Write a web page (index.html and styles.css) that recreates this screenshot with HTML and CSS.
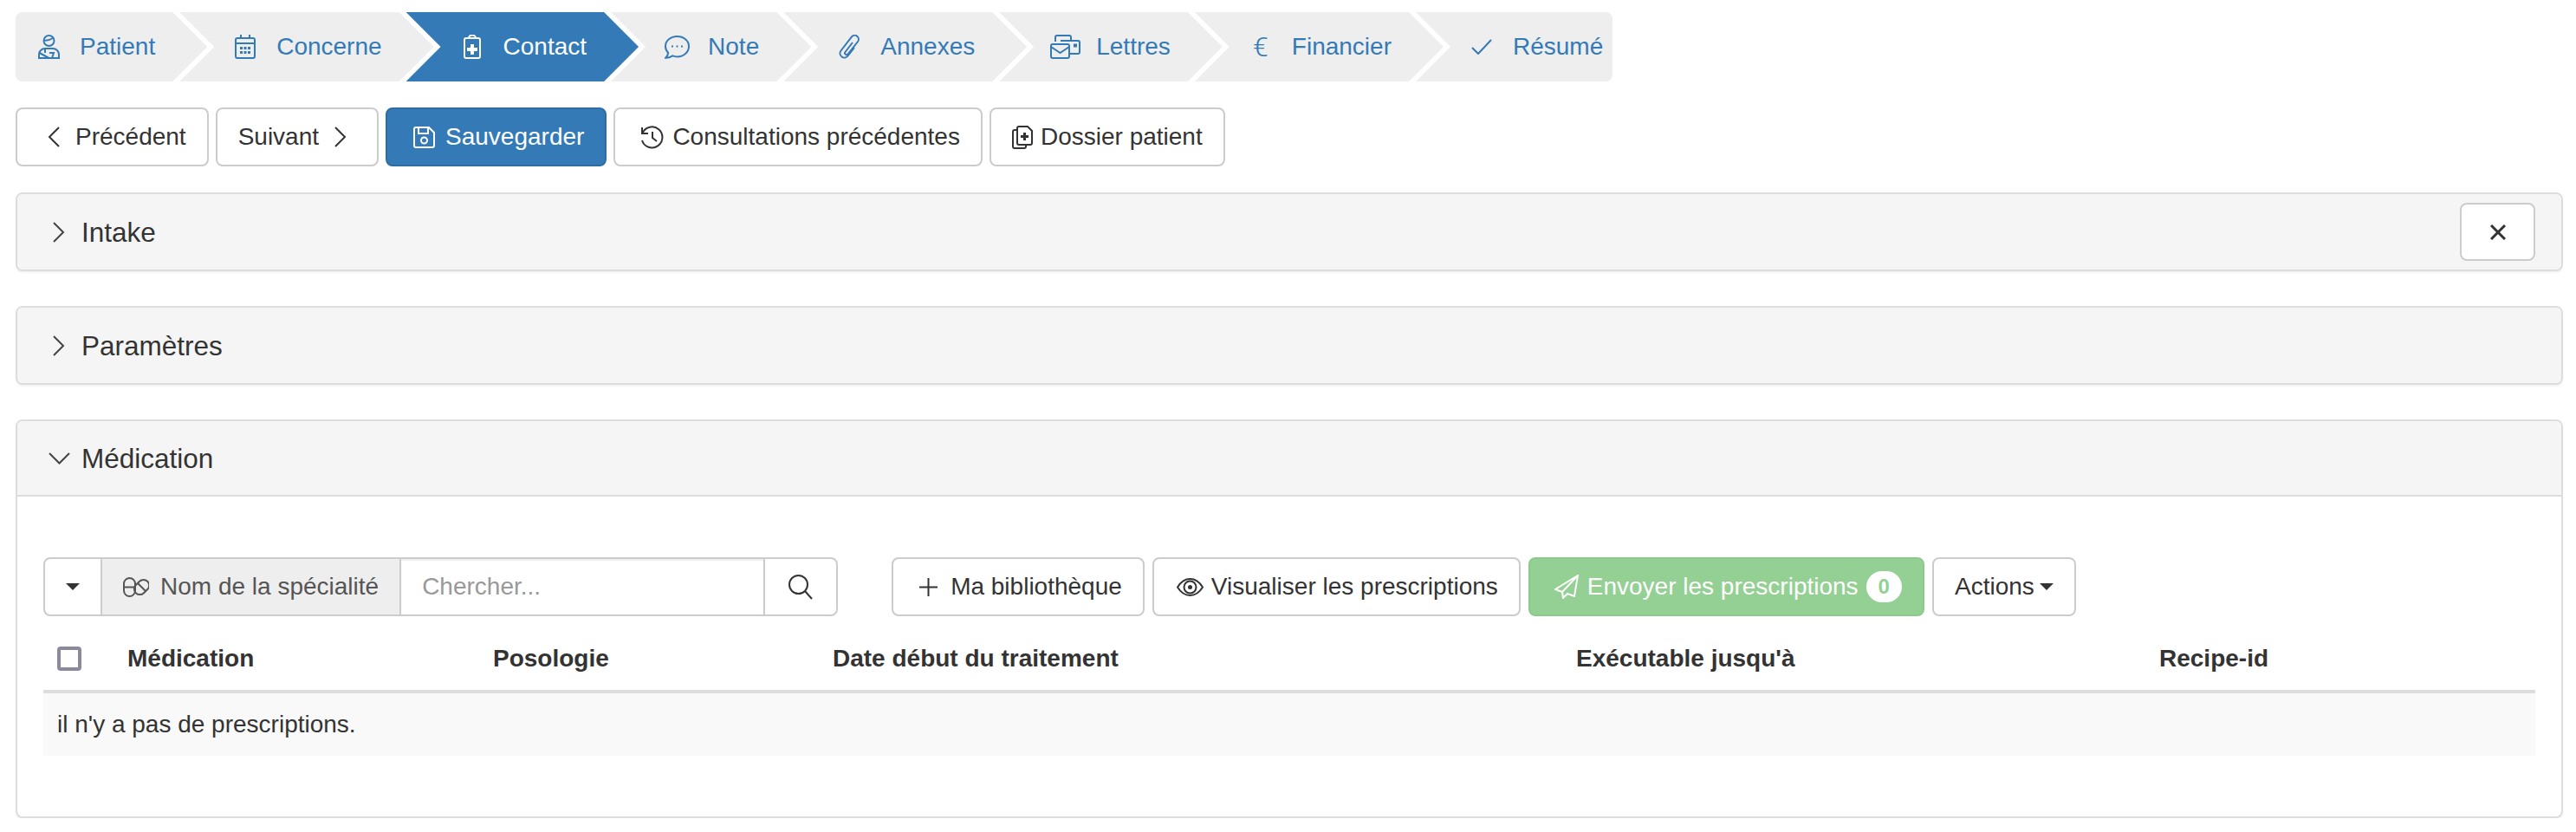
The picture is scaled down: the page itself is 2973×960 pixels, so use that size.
FILE: index.html
```html
<!DOCTYPE html>
<html lang="fr">
<head>
    <meta charset="UTF-8">
    <meta name="viewport" content="width=device-width, initial-scale=1.0">
    <title>Contact</title>
    <link rel="stylesheet" href="styles.css">
</head>
<body>

<ul class="wizard">
    <li class="step step-first">
        <span class="step-icon"><svg class="ico" width="25" height="28" viewBox="0 0 25 28"><circle cx="12.5" cy="7" r="6"/><path d="M6.8 6.5C10 7 14 6 18 3.5"/><path d="M1 27v-4a7 7 0 0 1 7-7h9a7 7 0 0 1 7 7v4z"/><path d="M1.5 21l11 6M8 16v5M16 27l2-6h-5"/></svg></span>Patient
    </li>
    <li class="step">
        <span class="step-icon"><svg class="ico" width="24" height="28" viewBox="0 0 24 28"><rect x="1" y="4" width="22" height="23" rx="2"/><path d="M1 10h22M7 0v4M17 0v4"/><path class="dots" d="M6 14h3v3H6zM10.500 14h3v3h-3zM15 14h3v3h-3zM6 19h3v3H6zM10.500 19h3v3h-3zM15 19h3v3h-3z"/></svg></span>Concerne
    </li>
    <li class="step step-active">
        <span class="step-icon"><svg class="ico" width="20" height="28" viewBox="0 0 20 28"><rect x="1" y="4" width="18" height="23" rx="2"/><path d="M6 4a4 3.500 0 0 1 8 0"/><path class="dots" d="M8 11h4v4h4v4h-4v4H8v-4H4v-4h4z"/></svg></span>Contact
    </li>
    <li class="step">
        <span class="step-icon"><svg class="ico" width="29" height="27" viewBox="0 0 29 27"><path d="M14.500 1C7 1 1 6 1 12.500c0 3 1.300 5.500 3.200 7.500-.4 2.500-1.700 4.500-3 5.800 3.300 0 6-1 8-2.400 1.700.6 3.500 1 5.300 1 7.500 0 13.500-5.200 13.500-11.900S22 1 14.500 1z"/><path class="dots" d="M8 11.500h2v2H8zM13.500 11.500h2v2h-2zM19 11.500h2v2h-2z"/></svg></span>Note
    </li>
    <li class="step">
        <span class="step-icon"><svg class="ico" width="26" height="28" viewBox="0 0 26 28"><path d="M17 9L8.500 20a2 2 0 0 0 3.200 2.400L23 8a4.500 4.500 0 0 0-7.200-5.400L3.500 18.500a5 5 0 0 0 8 6L19 15"/></svg></span>Annexes
    </li>
    <li class="step">
        <span class="step-icon"><svg class="ico" width="35" height="28" viewBox="0 0 35 28"><rect x="1" y="11" width="21" height="16" rx="2"/><path d="M1 14l10.500 7L22 14"/><path d="M6 8V3a2 2 0 0 1 2-2h14a2 2 0 0 1 2 2v3"/><path d="M12 7h20a2 2 0 0 1 2 2v11a2 2 0 0 1-2 2h-10"/><path class="dots" d="M27 10.500h4v4h-4z"/></svg></span>Lettres
    </li>
    <li class="step">
        <span class="step-icon step-euro">€</span>Financier
    </li>
    <li class="step step-last">
        <span class="step-icon"><svg class="ico" width="24" height="18" viewBox="0 0 24 18"><path d="M1 10l7 7L23 1"/></svg></span>Résumé
    </li>
</ul>

<div class="toolbar">
    <button class="btn"><span class="btn-icon"><svg class="ico" width="14" height="24" viewBox="0 0 14 24"><path d="M13 1L2 12l11 11"/></svg></span>Précédent</button>
    <button class="btn">Suivant<span class="btn-icon btn-icon-after"><svg class="ico" width="14" height="24" viewBox="0 0 14 24"><path d="M1 1l11 11L1 23"/></svg></span></button>
    <button class="btn btn-primary"><span class="btn-icon"><svg class="ico" width="25" height="25" viewBox="0 0 25 25"><path d="M3 1h15l6 6v15a2 2 0 0 1-2 2H3a2 2 0 0 1-2-2V3a2 2 0 0 1 2-2z"/><path d="M6 1v7h11V1"/><circle cx="12.500" cy="16" r="3.500"/></svg></span>Sauvegarder</button>
    <button class="btn"><span class="btn-icon btn-icon-tight"><svg class="ico" width="27" height="27" viewBox="0 0 27 27"><path d="M2 2v7h7"/><path d="M2.500 8.500A12 12 0 1 1 2 17"/><path d="M14 7v7l5 4"/></svg></span>Consultations précédentes</button>
    <button class="btn"><span class="btn-icon btn-icon-file"><svg class="ico" width="24" height="27" viewBox="0 0 24 27"><path d="M6 5H3a2 2 0 0 0-2 2v17a2 2 0 0 0 2 2h11a2 2 0 0 0 2-2v-2"/><path d="M8 1h10l5 5v14a2 2 0 0 1-2 2H8a2 2 0 0 1-2-2V3a2 2 0 0 1 2-2z"/><path class="dots" d="M13 8h3v3h3v3h-3v3h-3v-3h-3v-3h3z"/></svg></span>Dossier patient</button>
</div>

<div class="panel">
    <div class="panel-heading">
        <span class="panel-toggle"><svg class="ico" width="14" height="24" viewBox="0 0 14 24"><path d="M1 1l11 11L1 23"/></svg></span>
        <h3 class="panel-title">Intake</h3>
        <button class="btn btn-close"><svg class="ico ico-close" width="18" height="18" viewBox="0 0 18 18"><path d="M1 1l16 16M17 1L1 17"/></svg></button>
    </div>
</div>

<div class="panel">
    <div class="panel-heading">
        <span class="panel-toggle"><svg class="ico" width="14" height="24" viewBox="0 0 14 24"><path d="M1 1l11 11L1 23"/></svg></span>
        <h3 class="panel-title">Paramètres</h3>
    </div>
</div>

<div class="panel panel-open">
    <div class="panel-heading">
        <span class="panel-toggle"><svg class="ico" width="25" height="14" viewBox="0 0 25 14"><path d="M1 1l11.500 11.500L24 1"/></svg></span>
        <h3 class="panel-title">Médication</h3>
    </div>
    <div class="panel-body">
        <div class="med-toolbar">
            <div class="search-group">
                <button class="group-btn group-first"><span class="caret"></span></button>
                <span class="group-addon"><svg class="ico addon-icon" width="30" height="23" viewBox="0 0 30 23"><rect x="1" y="1" width="13" height="21" rx="6.500"/><path d="M1 11.500h13"/><rect x="15" y="2" width="13" height="19" rx="6.500" transform="rotate(45 21.500 11.500)"/><path d="M17 7l9 9"/></svg>Nom de la spécialité</span>
                <input class="group-input" type="text" placeholder="Chercher...">
                <button class="group-btn group-last"><svg class="ico" width="28" height="29" viewBox="0 0 28 29"><circle cx="11.500" cy="11.500" r="10.500"/><path d="M19 19l8 9"/></svg></button>
            </div>
            <button class="btn"><span class="btn-icon btn-icon-plus"><svg class="ico" width="21" height="21" viewBox="0 0 21 21"><path d="M10.500 0v21M0 10.500h21"/></svg></span>Ma bibliothèque</button>
            <button class="btn"><span class="btn-icon btn-icon-tight"><svg class="ico" width="31" height="21" viewBox="0 0 31 21"><path d="M1 10.500C5 4 10 1 15.500 1S26 4 30 10.500C26 17 21 20 15.500 20S5 17 1 10.500z"/><circle cx="15.500" cy="10.500" r="7"/><circle class="dots" cx="15.500" cy="10.500" r="2.500"/></svg></span>Visualiser les prescriptions</button>
            <button class="btn btn-send"><span class="btn-icon btn-icon-tight"><svg class="ico" width="28" height="28" viewBox="0 0 28 28"><path d="M27 1L1 17l8 3 1 7 5-5 8 3z"/><path d="M27 1L9 20"/></svg></span>Envoyer les prescriptions<span class="badge">0</span></button>
            <button class="btn">Actions<span class="caret caret-after"></span></button>
        </div>

        <table class="med-table">
            <thead>
                <tr>
                    <th><span class="check"></span></th>
                    <th>Médication</th>
                    <th>Posologie</th>
                    <th>Date début du traitement</th>
                    <th>Exécutable jusqu'à</th>
                    <th>Recipe-id</th>
                </tr>
            </thead>
            <tbody>
                <tr>
                    <td colspan="6">il n'y a pas de prescriptions.</td>
                </tr>
            </tbody>
        </table>
    </div>
</div>

</body>
</html>
```

FILE: styles.css
```css
* {
    box-sizing: border-box;
}
body {
    margin: 0;
    padding: 14px 15px 0 18px;
    font-family: "Liberation Sans", Arial, sans-serif;
    font-size: 28px;
    line-height: 40px;
    color: #333;
    background-color: #fff;
}
.ico {
    display: block;
    fill: none;
    stroke: currentColor;
    stroke-width: 2;
}
.ico .dots {
    fill: currentColor;
    stroke: none;
}

/* wizard */
.wizard {
    display: flex;
    list-style: none;
    margin: 0 0 30px;
    padding: 0;
}
.step {
    display: flex;
    align-items: center;
    height: 80px;
    margin-left: -32px;
    padding: 0 60px 0 56px;
    color: #337ab7;
    background-color: #eee;
    clip-path: polygon(0 0, calc(100% - 40px) 0, 100% 50%, calc(100% - 40px) 100%, 0 100%, 40px 50%);
}
.step-first {
    margin-left: 0;
    padding-left: 18px;
    border-radius: 8px 0 0 8px;
    clip-path: polygon(0 0, calc(100% - 40px) 0, 100% 50%, calc(100% - 40px) 100%, 0 100%);
}
.step-last {
    padding-right: 11px;
    border-radius: 0 8px 8px 0;
    clip-path: polygon(0 0, 100% 0, 100% 100%, 0 100%, 40px 50%);
}
.step-active {
    color: #fff;
    background-color: #337ab7;
}
.step-icon {
    display: flex;
    justify-content: center;
    width: 40px;
    margin-right: 16px;
}
.step-euro {
    font-family: Roboto, sans-serif;
    font-weight: 300;
    font-size: 32px;
}

/* buttons */
.toolbar {
    display: flex;
    gap: 8px;
    margin-bottom: 30px;
}
.btn {
    display: inline-flex;
    align-items: center;
    height: 68px;
    padding: 0 24px;
    font: inherit;
    color: #333;
    background-color: #fff;
    border: 2px solid #ccc;
    border-radius: 8px;
    cursor: pointer;
}
.btn-primary {
    color: #fff;
    background-color: #337ab7;
    border-color: #2e6da4;
}
.btn-icon {
    display: flex;
    justify-content: center;
    width: 36px;
    margin-right: 7px;
}
.btn-icon-after {
    margin: 0 0 0 7px;
}
.btn-icon-tight {
    margin-right: 6px;
}
.btn-icon-file {
    width: 24px;
    margin-right: 9px;
}
.btn-icon-plus {
    width: 33px;
    margin-right: 9px;
}
.btn-close {
    justify-content: center;
    width: 87px;
    height: 67px;
    margin-left: auto;
    padding: 0;
}
.ico-close {
    stroke-width: 3;
}

/* panels */
.panel {
    margin-bottom: 40px;
    background-color: #fff;
    border: 2px solid #ddd;
    border-radius: 8px;
    box-shadow: 0 2px 2px rgba(0, 0, 0, 0.05);
    overflow: hidden;
}
.panel-open {
    margin-bottom: 0;
}
.panel-heading {
    display: flex;
    align-items: center;
    height: 87px;
    padding: 0 30px;
    background-color: #f5f5f5;
}
.panel-open .panel-heading {
    border-bottom: 2px solid #ddd;
}
.panel-toggle {
    display: flex;
    justify-content: center;
    width: 36px;
    margin-right: 8px;
    color: #444;
}
.panel-title {
    margin: 0;
    font-size: 31.5px;
    font-weight: normal;
}
.panel-body {
    padding: 70px 30px 30px;
}

/* medication toolbar */
.med-toolbar {
    display: flex;
    margin-bottom: 13px;
    gap: 9px;
}
.search-group {
    display: flex;
    height: 68px;
    margin-right: 53px;
}
.group-btn {
    display: flex;
    align-items: center;
    justify-content: center;
    padding: 0;
    color: #333;
    background-color: #fff;
    border: 2px solid #ccc;
    cursor: pointer;
}
.group-first {
    width: 68px;
    border-radius: 8px 0 0 8px;
}
.group-last {
    width: 86px;
    margin-left: -2px;
    border-radius: 0 8px 8px 0;
}
.group-addon {
    display: flex;
    align-items: center;
    padding: 0 24px;
    margin-left: -2px;
    color: #555;
    background-color: #eee;
    border: 2px solid #ccc;
}
.addon-icon {
    margin-right: 13px;
}
.group-input {
    width: 422px;
    padding: 0 24px;
    margin-left: -2px;
    font: inherit;
    color: #555;
    border: 2px solid #ccc;
    box-shadow: inset 0 2px 2px rgba(0, 0, 0, 0.075);
    outline: none;
}
.group-input::placeholder {
    color: #999;
    opacity: 1;
}
.caret {
    width: 0;
    height: 0;
    border-top: 8px solid #333;
    border-left: 8px solid transparent;
    border-right: 8px solid transparent;
}
.caret-after {
    margin-left: 6px;
}
.btn-send {
    color: #fff;
    background-color: #5cb85c;
    border-color: #4cae4c;
    opacity: 0.65;
}
.badge {
    margin-left: 9px;
    padding: 6px 14px;
    font-size: 24px;
    font-weight: bold;
    line-height: 24px;
    color: #5cb85c;
    background-color: #fff;
    border-radius: 20px;
}

/* medication table */
.med-table {
    width: 100%;
    margin-bottom: 40px;
    table-layout: fixed;
    border-collapse: collapse;
}
.med-table th {
    padding: 16px;
    font-weight: bold;
    text-align: left;
    border-bottom: 4px solid #ddd;
}
.med-table th:nth-child(1) { width: 81px; }
.med-table th:nth-child(2) { width: 422px; }
.med-table th:nth-child(3) { width: 392px; }
.med-table th:nth-child(4) { width: 858px; }
.med-table th:nth-child(5) { width: 673px; }
.med-table td {
    padding: 16px;
    background-color: #f9f9f9;
}
.check {
    display: block;
    width: 28px;
    height: 28px;
    background-color: #fff;
    border: 4px solid #8c8a9a;
    border-radius: 4px;
}
```
